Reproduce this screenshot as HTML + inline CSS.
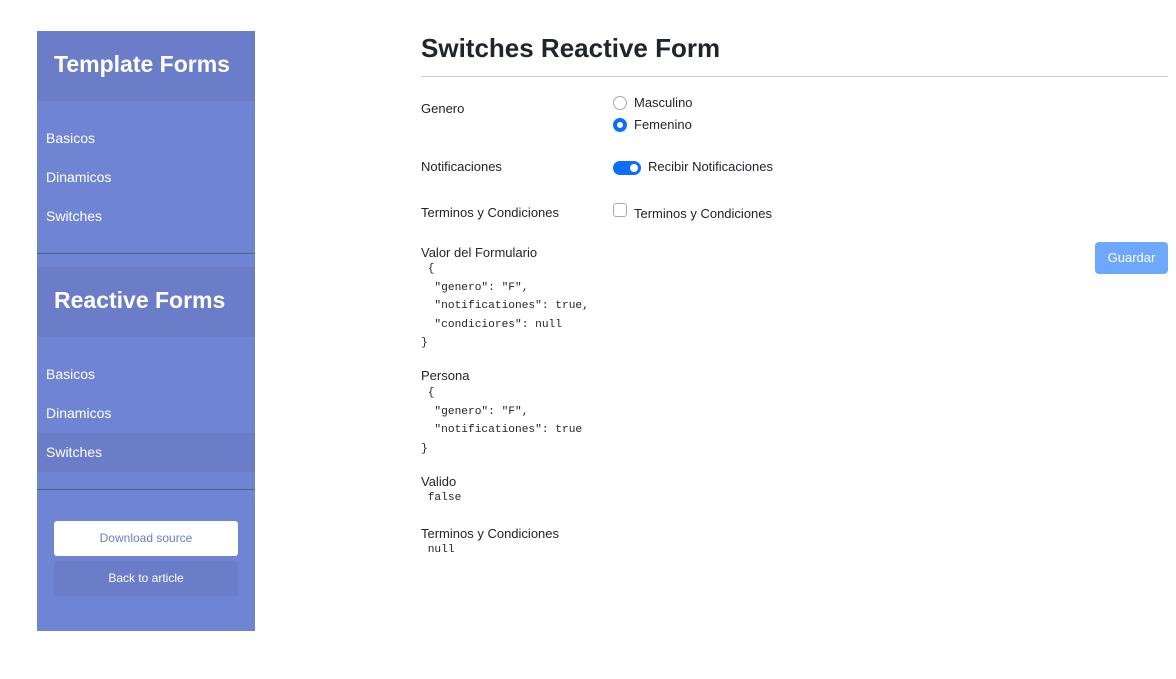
<!DOCTYPE html>
<html><head><meta charset="utf-8"><style>
*{box-sizing:border-box;margin:0;padding:0}
body{width:1176px;height:679px;background:#fff;font-family:"Liberation Sans",sans-serif;color:#212529;position:relative;overflow:hidden}
.a{position:absolute}
.sb{left:37px;top:31px;width:218px;height:600px;background:#7084d4}
.hd{position:absolute;left:0;width:218px;height:70px;background:#6b7cc9;color:#fff;font-size:23px;font-weight:bold;padding-left:17px;line-height:66px}
.it{position:absolute;left:9px;color:#fff;font-size:14px}
.dv{position:absolute;left:0;width:218px;height:1px;background:#4f6090}
.lb{position:absolute;left:421px;font-size:13px;color:#212529}
.mono{position:absolute;font-family:"Liberation Mono",monospace;font-size:11.2px;white-space:pre;line-height:18.5px;color:#212529}
.ct{position:absolute;left:634px;font-size:13px}
</style></head><body>
<div class="a sb">
 <div class="hd" style="top:0">Template Forms</div>
 <div class="it" style="top:99px">Basicos</div>
 <div class="it" style="top:138px">Dinamicos</div>
 <div class="it" style="top:177px">Switches</div>
 <div class="dv" style="top:222px"></div>
 <div class="hd" style="top:236px">Reactive Forms</div>
 <div class="it" style="top:335px">Basicos</div>
 <div class="it" style="top:374px">Dinamicos</div>
 <div style="position:absolute;left:0;top:402px;width:218px;height:39px;background:#6b7cc9"></div>
 <div class="it" style="top:413px">Switches</div>
 <div class="dv" style="top:458px"></div>
 <div style="position:absolute;left:17px;top:490px;width:184px;height:35px;background:#fff;border-radius:3px;color:#6b7cc9;font-size:12px;text-align:center;line-height:35px">Download source</div>
 <div style="position:absolute;left:17px;top:530px;width:184px;height:35px;background:#6b7cc9;border-radius:3px;color:#fff;font-size:12px;text-align:center;line-height:35px">Back to article</div>
</div>
<div class="a" style="left:421px;top:33px;font-size:26px;font-weight:bold;color:#212529">Switches Reactive Form</div>
<div class="a" style="left:421px;top:76px;width:747px;height:1px;background:#ccc"></div>
<div class="lb" style="top:101px">Genero</div>
<div class="a" style="left:613px;top:96px;width:14px;height:14px;border:1px solid #aaa;border-radius:50%"></div>
<div class="ct" style="top:95px">Masculino</div>
<div class="a" style="left:613px;top:118px;width:14px;height:14px;border:4px solid #0d6efd;border-radius:50%;background:#fff"></div>
<div class="ct" style="top:117px">Femenino</div>
<div class="lb" style="top:159px">Notificaciones</div>
<div class="a" style="left:613px;top:161px;width:28px;height:14px;border-radius:7px;background:#0d6efd"><div style="position:absolute;right:3px;top:3px;width:8px;height:8px;border-radius:50%;background:#fff"></div></div>
<div class="a" style="left:648px;top:159px;font-size:13px">Recibir Notificaciones</div>
<div class="lb" style="top:205px">Terminos y Condiciones</div>
<div class="a" style="left:613px;top:203px;width:14px;height:14px;border:1px solid #aaa;border-radius:3px"></div>
<div class="ct" style="top:206px">Terminos y Condiciones</div>
<div class="lb" style="top:245px">Valor del Formulario</div>
<div class="mono" style="left:421px;top:260px"> {
  "genero": "F",
  "notificationes": true,
  "condiciores": null
}</div>
<div class="lb" style="top:368px">Persona</div>
<div class="mono" style="left:421px;top:384px"> {
  "genero": "F",
  "notificationes": true
}</div>
<div class="lb" style="top:474px">Valido</div>
<div class="mono" style="left:421px;top:489px"> false</div>
<div class="lb" style="top:526px">Terminos y Condiciones</div>
<div class="mono" style="left:421px;top:541px"> null</div>
<div class="a" style="left:1095px;top:242px;width:73px;height:32px;background:#6ea8fe;border-radius:4px;color:#fff;font-size:13px;text-align:center;line-height:32px">Guardar</div>
</body></html>
